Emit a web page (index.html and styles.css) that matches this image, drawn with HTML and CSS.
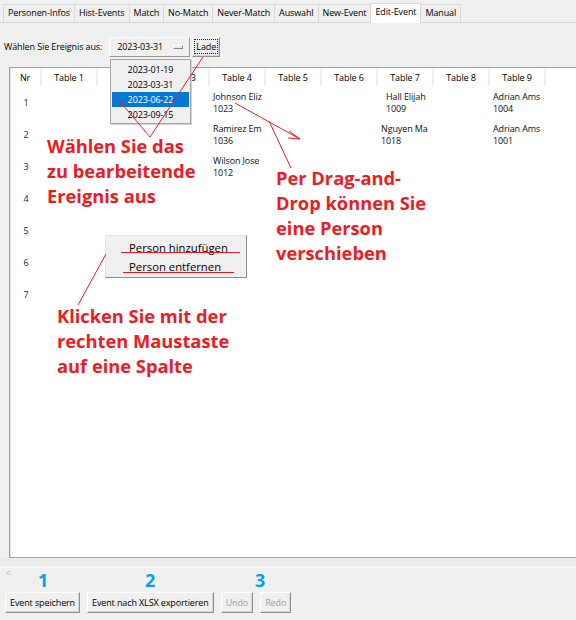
FILE: index.html
```html
<!DOCTYPE html>
<html lang="de">
<head>
<meta charset="utf-8">
<title>Edit-Event</title>
<link rel="stylesheet" href="styles.css">
</head>
<body>
<div class="app">
  <div class="tabs">
    <div class="tab">Personen-Infos</div>
    <div class="tab">Hist-Events</div>
    <div class="tab">Match</div>
    <div class="tab">No-Match</div>
    <div class="tab">Never-Match</div>
    <div class="tab">Auswahl</div>
    <div class="tab">New-Event</div>
    <div class="tab active">Edit-Event</div>
    <div class="tab">Manual</div>
  </div>
  <div class="pane">
    <div class="toolbar">
      <span class="label">Wählen Sie Ereignis aus:</span>
      <div class="combo"><span class="combo-value">2023-03-31</span><span class="indicator"></span></div>
      <div class="btn load"><span class="focus">Lade</span></div>
    </div>
    <div class="table-frame">
      <div class="row head">
        <div class="hcell">Nr</div>
        <div class="hcell">Table 1</div>
        <div class="hcell">Table 2</div>
        <div class="hcell">Table 3</div>
        <div class="hcell">Table 4</div>
        <div class="hcell">Table 5</div>
        <div class="hcell">Table 6</div>
        <div class="hcell">Table 7</div>
        <div class="hcell">Table 8</div>
        <div class="hcell">Table 9</div>
      </div>
      <div class="row">
        <div class="nr">1</div>
        <div class="cell"></div><div class="cell"></div><div class="cell"></div>
        <div class="cell">Johnson Eliz<br>1023</div>
        <div class="cell"></div><div class="cell"></div>
        <div class="cell wide">Hall Elijah<br>1009</div>
        <div class="cell"></div>
        <div class="cell">Adrian Ams<br>1004</div>
      </div>
      <div class="row">
        <div class="nr">2</div>
        <div class="cell"></div><div class="cell"></div><div class="cell"></div>
        <div class="cell">Ramirez Em<br>1036</div>
        <div class="cell"></div><div class="cell"></div>
        <div class="cell">Nguyen Ma<br>1018</div>
        <div class="cell"></div>
        <div class="cell">Adrian Ams<br>1001</div>
      </div>
      <div class="row">
        <div class="nr">3</div>
        <div class="cell"></div><div class="cell"></div><div class="cell"></div>
        <div class="cell">Wilson Jose<br>1012</div>
      </div>
      <div class="row"><div class="nr">4</div></div>
      <div class="row"><div class="nr">5</div></div>
      <div class="row"><div class="nr">6</div></div>
      <div class="row"><div class="nr">7</div></div>
    </div>
    <div class="hscroll"></div>
    <div class="scroll-left">&lt;</div>
    <div class="buttons">
      <div class="btn">Event speichern</div>
      <div class="btn">Event nach XLSX exportieren</div>
      <div class="btn disabled">Undo</div>
      <div class="btn disabled">Redo</div>
    </div>
  </div>

  <div class="dropdown">
    <div class="opt">2023-01-19</div>
    <div class="opt">2023-03-31</div>
    <div class="opt selected">2023-06-22</div>
    <div class="opt">2023-09-15</div>
  </div>

  <div class="menu">
    <div class="menu-item">Person hinzufügen</div>
    <div class="menu-item">Person entfernen</div>
  </div>

  <svg class="ink" width="576" height="620" viewBox="0 0 576 620">
    <g stroke="#ed1c24" stroke-width="1" fill="none">
      <line x1="117" y1="98" x2="150" y2="137"/>
      <line x1="203" y1="57" x2="150" y2="137"/>
      <line x1="235" y1="103" x2="300" y2="139"/>
      <polyline points="289,131 300,139 288,138"/>
      <line x1="269" y1="121" x2="291" y2="168"/>
      <line x1="106" y1="254" x2="78" y2="305"/>
      <line x1="121" y1="252.5" x2="240" y2="252.5"/>
      <line x1="123" y1="272.5" x2="234" y2="272.5"/>
    </g>
  </svg>

  <div class="note n1">Wählen Sie das<br>zu bearbeitende<br>Ereignis aus</div>
  <div class="note n2">Per Drag-and-<br>Drop können Sie<br>eine Person<br>verschieben</div>
  <div class="note n3">Klicken Sie mit der<br>rechten Maustaste<br>auf eine Spalte</div>

  <div class="mark m1">1</div>
  <div class="mark m2">2</div>
  <div class="mark m3">3</div>
</div>
</body>
</html>
```

FILE: styles.css
```css
* { box-sizing: border-box; }

html, body {
  margin: 0;
  padding: 0;
  background: #f0f0f0;
}

.app {
  position: relative;
  width: 576px;
  height: 620px;
  overflow: hidden;
  font-family: "Open Sans", "Noto Sans", sans-serif;
  font-size: 9px;
  letter-spacing: -0.12px;
  color: #000;
}

/* Tabs */
.tabs {
  display: flex;
  align-items: flex-end;
  height: 23px;
  padding-left: 4px;
  border-bottom: 1px solid #d9d9d9;
}
.tab {
  height: 18px;
  line-height: 16px;
  padding: 0 4px;
  margin-left: -1px;
  border: 1px solid #d9d9d9;
  border-bottom: none;
  background: #f0f0f0;
  white-space: nowrap;
}
.tab.active {
  height: 20px;
  line-height: 16px;
  background: #fff;
  margin-bottom: -1px;
  position: relative;
  z-index: 1;
}

/* Pane */
.pane {
  display: flex;
  flex-direction: column;
}
.toolbar {
  display: flex;
  align-items: center;
  height: 21px;
  margin-top: 13px;
  padding-left: 4px;
}
.label { white-space: nowrap; }

.combo {
  display: flex;
  align-items: center;
  justify-content: space-between;
  width: 81px;
  height: 20px;
  margin-left: 7px;
  padding: 0 6px 0 7px;
  border: 1px solid;
  border-color: #fdfdfd #9a9a9a #9a9a9a #fdfdfd;
  background: #f0f0f0;
}
.indicator {
  width: 10px;
  height: 4px;
  border: 1px solid;
  border-color: #fff #8a8a8a #8a8a8a #fff;
  background: #e8e8e8;
}

.btn {
  display: flex;
  align-items: center;
  justify-content: center;
  height: 21px;
  padding: 0 4px;
  border: 1px solid;
  border-color: #fdfdfd #8f8f8f #8f8f8f #fdfdfd;
  box-shadow: inset -1px -1px 0 #d6d6d6;
  background: #f0f0f0;
  white-space: nowrap;
}
.btn.load {
  width: 28px;
  height: 20px;
  margin-left: 2px;
  padding: 0 1px;
}
.focus {
  display: flex;
  align-items: center;
  justify-content: center;
  width: 100%;
  height: 15px;
  border: 1px dotted #222;
}
.btn.disabled { color: #a0a0a0; }

/* Table */
.table-frame {
  height: 491px;
  margin-top: 10px;
  margin-left: 9px;
  border: 1px solid #a0a0a0;
  border-right: none;
  background: #fff;
  box-shadow: inset 1px 0 0 #e3e3e3;
}
.row {
  display: grid;
  grid-template-columns: 32px repeat(9, 56px);
  height: 32px;
}
.row.head { height: 18px; }
.hcell {
  display: flex;
  align-items: center;
  justify-content: center;
  border-right: 2px solid #efefef;
  white-space: nowrap;
}
.nr {
  display: flex;
  align-items: center;
  justify-content: center;
  color: #2a1a2e;
}
.cell {
  padding: 5px 2px 0 3px;
  line-height: 12px;
  white-space: nowrap;
  overflow: hidden;
  color: #111;
}
.cell.wide { padding-left: 8px; }

/* Bottom */
.hscroll {
  height: 10px;
  background: linear-gradient(#ebebeb 0 8px, #f6f6f6 8px 10px);
}
.scroll-left {
  height: 24px;
  padding-left: 6px;
  font-size: 9px;
  line-height: 10px;
  color: #b0b0b0;
}
.buttons {
  display: flex;
  gap: 7px;
  padding-left: 5px;
}

/* Dropdown */
.dropdown {
  position: absolute;
  left: 110px;
  top: 59px;
  width: 81px;
  height: 65px;
  padding: 2px 1px;
  border: 1px solid #a6a6a6;
  background: #f0f0f0;
  box-shadow: 1px 1px 0 #d0d0d0;
}
.opt {
  height: 15px;
  line-height: 15px;
  text-align: center;
}
.opt.selected {
  background: #0078d7;
  color: #fff;
}

/* Context menu */
.menu {
  position: absolute;
  left: 105px;
  top: 235px;
  width: 142px;
  height: 43px;
  padding-top: 2px;
  border: 1px solid;
  border-color: #e3e3e3 #8c8c8c #8c8c8c #e3e3e3;
  background: #f0f0f0;
  font-size: 11.3px;
  letter-spacing: 0;
}
.menu-item {
  height: 19px;
  line-height: 19px;
  padding-left: 23px;
  white-space: nowrap;
}

/* Annotation overlay */
.ink {
  position: absolute;
  left: 0;
  top: 0;
  pointer-events: none;
}
.note {
  position: absolute;
  font-family: "Open Sans", "Noto Sans", sans-serif;
  font-weight: 700;
  font-size: 18.3px;
  letter-spacing: 0;
  line-height: 25px;
  color: #ed1c24;
  white-space: nowrap;
}
.n1 { left: 47px; top: 133px; }
.n2 { left: 276px; top: 165px; }
.n3 { left: 57px; top: 303px; }

.mark {
  position: absolute;
  top: 568px;
  font-family: "Open Sans", "Noto Sans", sans-serif;
  font-weight: 700;
  font-size: 18px;
  letter-spacing: 0;
  line-height: 25px;
  color: #00a2e8;
}
.m1 { left: 38px; }
.m2 { left: 145px; }
.m3 { left: 255px; }
```
